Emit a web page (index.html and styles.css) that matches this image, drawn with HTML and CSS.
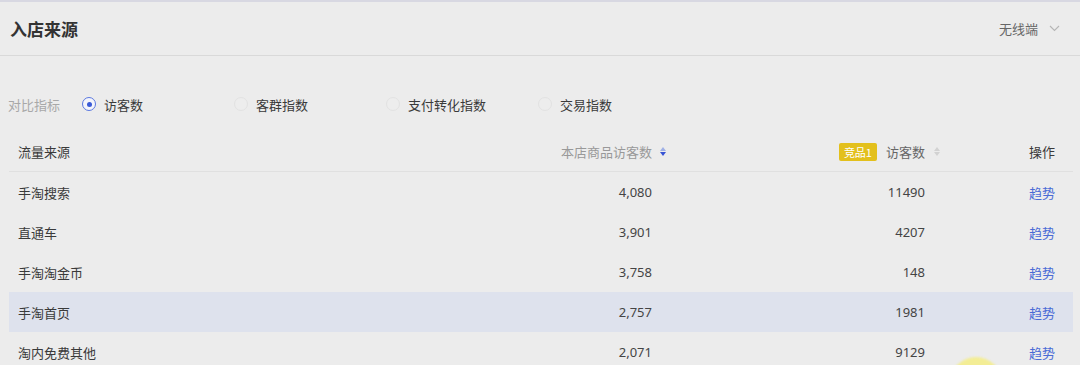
FILE: index.html
```html
<!DOCTYPE html>
<html lang="zh-CN">
<head>
<meta charset="utf-8">
<title>入店来源</title>
<link rel="stylesheet" href="styles.css">
</head>
<body>
<div class="page">
  <div class="top-line"></div>
  <div class="header">
    <h1 class="title">入店来源</h1>
    <div class="device">
      <span>无线端</span>
      <svg class="chev" width="11" height="7" viewBox="0 0 11 7"><path d="M1 1 L5.5 5.5 L10 1" fill="none" stroke="#b5b5b5" stroke-width="1.1"/></svg>
    </div>
  </div>

  <div class="filter">
    <span class="filter-label">对比指标</span>
    <label class="opt"><span class="radio on"></span><span>访客数</span></label>
    <label class="opt"><span class="radio"></span><span>客群指数</span></label>
    <label class="opt"><span class="radio"></span><span>支付转化指数</span></label>
    <label class="opt"><span class="radio"></span><span>交易指数</span></label>
  </div>

  <div class="table">
    <div class="row head">
      <div class="c1">流量来源</div>
      <div class="c2 sortable"><span class="muted">本店商品访客数</span><span class="sort active"><i class="up"></i><i class="down"></i></span></div>
      <div class="c3 sortable"><span class="badge">竞品1</span><span class="mid">访客数</span><span class="sort"><i class="up"></i><i class="down"></i></span></div>
      <div class="c4">操作</div>
    </div>
    <div class="row">
      <div class="c1">手淘搜索</div><div class="c2 num">4,080</div><div class="c3 num">11490</div><div class="c4"><a class="link">趋势</a></div>
    </div>
    <div class="row">
      <div class="c1">直通车</div><div class="c2 num">3,901</div><div class="c3 num">4207</div><div class="c4"><a class="link">趋势</a></div>
    </div>
    <div class="row">
      <div class="c1">手淘淘金币</div><div class="c2 num">3,758</div><div class="c3 num">148</div><div class="c4"><a class="link">趋势</a></div>
    </div>
    <div class="row hl">
      <div class="c1">手淘首页</div><div class="c2 num">2,757</div><div class="c3 num">1981</div><div class="c4"><a class="link">趋势</a></div>
    </div>
    <div class="row">
      <div class="c1">淘内免费其他</div><div class="c2 num">2,071</div><div class="c3 num">9129</div><div class="c4"><a class="link">趋势</a></div>
    </div>
  </div>
  <div class="cursor"></div>
</div>
</body>
</html>
```

FILE: styles.css
```css
* { box-sizing: border-box; }
html, body { margin: 0; padding: 0; }
body {
  background: #ececec;
  font-family: "Noto Sans CJK SC", "Noto Sans", sans-serif;
  color: #3a3a3a;
  width: 1080px;
  height: 365px;
  overflow: hidden;
}
.page { position: relative; height: 365px; overflow: hidden; }
.top-line { height: 2px; background: #d8d8e2; }
.header {
  height: 54px;
  display: flex;
  align-items: center;
  justify-content: space-between;
  padding: 0 20px 0 10px;
  border-bottom: 1px solid #d9d9d9;
}
.title {
  margin: 0;
  font-size: 17px;
  font-weight: 700;
  color: #333;
  line-height: 1;
}
.device {
  display: flex;
  align-items: center;
  gap: 11px;
  font-size: 13px;
  color: #666;
}
.filter {
  margin-top: 33px;
  height: 30px;
  display: flex;
  align-items: center;
  padding-left: 8px;
  font-size: 13px;
}
.filter-label { color: #a8a8a8; width: 74px; }
.opt {
  display: flex;
  align-items: center;
  gap: 8px;
  width: 152px;
  color: #3a3a3a;
}
.radio {
  width: 14px; height: 14px;
  border-radius: 50%;
  border: 1px solid #e2e2e2;
  background: #ededed;
  display: flex; align-items: center; justify-content: center;
}
.radio.on { border-color: #5a78e0; background: #f4f5fb; }
.radio.on::after {
  content: "";
  width: 5px; height: 5px; border-radius: 50%;
  background: #3b5bd6;
}
.table { margin: 13px 7px 0 9px; }
.row {
  display: grid;
  grid-template-columns: 400px 258px 274px 132px;
  height: 40px;
  align-items: center;
  font-size: 13px;
  color: #3a3a3a;
}
.row.head { border-bottom: 1px solid #e0e0e0; }
.row.hl { background: #dee2ed; }
.c1 { padding-left: 9px; }
.c2, .c3 { display: flex; justify-content: flex-end; align-items: center; }
.num { font-family: "Noto Sans", "Noto Sans CJK SC", sans-serif; color: #444; }
.c2.num { padding-right: 15px; }
.c3.num { padding-right: 16px; }
.c4 { text-align: right; padding-right: 18px; }
.muted { color: #999; }
.mid { color: #666; }
.sortable .sort {
  display: flex; flex-direction: column; gap: 1px;
  margin-left: 8px; margin-right: 1px;
}
.c3.sortable .sort { margin-left: 9px; margin-right: 1px; }
.sort i {
  display: block; width: 0; height: 0;
  border-left: 3.5px solid transparent;
  border-right: 3.5px solid transparent;
}
.sort .up { border-bottom: 4px solid #d2d2d2; }
.sort .down { border-top: 4px solid #d2d2d2; }
.sort.active .up { border-bottom-color: #9fb0e6; }
.sort.active .down { border-top-color: #3753d4; }
.badge {
  background: #e3c01c;
  color: #fff;
  font-size: 11px;
  line-height: 18px;
  height: 18px;
  padding: 0 5px;
  border-radius: 2px;
  margin-right: 9px;
}
.link { color: #4a6bd6; text-decoration: none; }
.cursor {
  position: absolute;
  left: 950px; top: 357px;
  width: 52px; height: 52px;
  border-radius: 50%;
  background: rgba(246, 238, 120, 0.75);
  filter: blur(1px);
}
```
